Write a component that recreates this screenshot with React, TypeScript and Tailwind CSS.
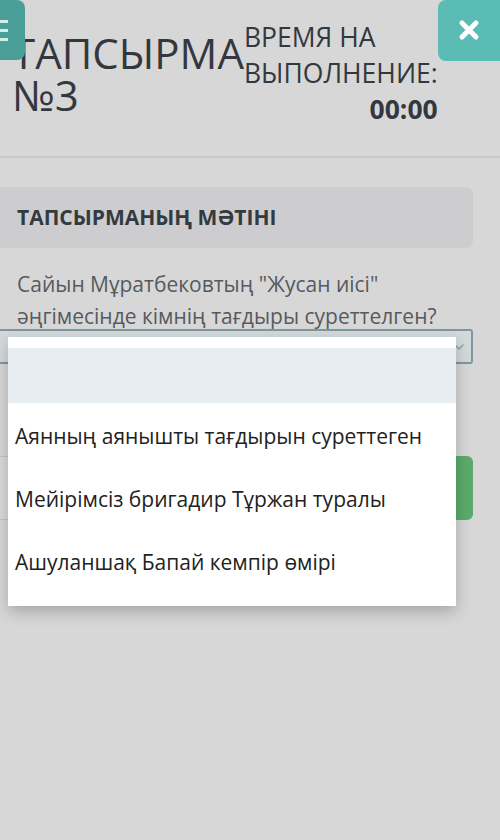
import { ChevronDown } from "lucide-react"

const options = [
  "Аянның аянышты тағдырын суреттеген",
  "Мейірімсіз бригадир Тұржан туралы",
  "Ашуланшақ Бапай кемпір өмірі",
]

function MenuButton() {
  return (
    <button className="absolute left-0 top-0 z-10 flex h-[60px] w-[25px] flex-col items-start justify-center gap-[6px] rounded-r-lg bg-[#4a9e98]">
      <span className="h-[3px] w-[8px] bg-[#d3ece9]" />
      <span className="h-[3px] w-[8px] bg-[#d3ece9]" />
      <span className="h-[3px] w-[8px] bg-[#d3ece9]" />
    </button>
  )
}

function CloseButton() {
  return (
    <button className="flex h-[61px] w-[63px] shrink-0 items-center justify-center rounded-l-lg bg-[#5bbcb5]">
      <svg width="24" height="24" viewBox="0 0 24 24" className="-mt-[1px]">
        <path d="M5 5 L19 19 M19 5 L5 19" stroke="#fff" strokeWidth="5" strokeLinecap="round" />
      </svg>
    </button>
  )
}

function Header() {
  return (
    <header className="relative flex h-[156px] items-start text-[#33383e]">
      <MenuButton />
      <h1 className="shrink-0 pl-3 pt-[32px] text-[42px] font-normal leading-[42px]">
        <div>ТАПСЫРМА</div>
        <div>№3</div>
      </h1>
      <div className="ml-auto shrink-0 pt-[19px] text-[26.5px] leading-[36px]">
        <div>ВРЕМЯ НА</div>
        <div>ВЫПОЛНЕНИЕ:</div>
        <div className="text-right font-bold">00:00</div>
      </div>
      <CloseButton />
    </header>
  )
}

function OptionsMenu() {
  return (
    <div className="absolute left-[8px] top-[8px] z-20 w-[448px] bg-white pb-[14px] pt-[11px] shadow-[0_6px_14px_rgba(0,0,0,0.22)]">
      <div className="h-[55px] bg-[#e6eef1]" />
      {options.map((o) => (
        <div key={o} className="flex h-[63px] items-center px-[7px] pt-1 text-[21px] text-[#222]">
          {o}
        </div>
      ))}
    </div>
  )
}

export default function App() {
  return (
    <div className="min-h-[840px] bg-[#d7d7d7] font-['Open_Sans',sans-serif]">
      <Header />
      <div className="h-[2px] bg-[#c9c9c9]" />

      <main className="mr-[27px] pt-[29px]">
        <div className="flex h-[61px] items-center rounded-r-lg bg-[#cdcdcf] pl-[17px] text-[21px] font-bold text-[#333a40]">
          ТАПСЫРМАНЫҢ МӘТІНІ
        </div>

        <p className="mt-5 pl-[17px] text-[21px] leading-[32px] text-[#555a5f]">
          Сайын Мұратбековтың "Жусан иісі"
          <br />
          әңгімесінде кімнің тағдыры суреттелген?
        </p>

        <div className="relative -mt-[3px]">
          <div className="flex h-[35px] items-center justify-end rounded-r-[3px] border-y-2 border-r-2 border-[#7e979d] bg-[#d3d9db] pr-[4px]">
            <ChevronDown size={16} strokeWidth={2} className="text-[#8a9ba0]" />
          </div>
          <OptionsMenu />
        </div>

        <div className="mt-[92px] flex h-[64px]">
          <div className="flex-1 border-y border-[#bfc4c6] bg-[#d9d9d9]" />
          <button className="w-[17px] rounded-r-md bg-[#5aab6b]" />
        </div>
      </main>
    </div>
  )
}
